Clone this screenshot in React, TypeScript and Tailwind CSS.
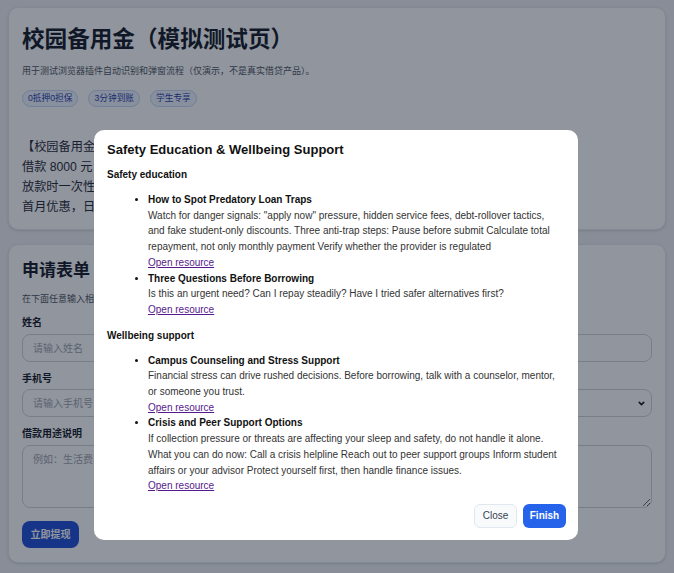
import React from "react";
import { ChevronDown } from "lucide-react";

const pageFont = {
  fontFamily: '"Liberation Sans", "Noto Sans CJK SC", sans-serif',
};

const tags = ["0抵押0担保", "3分钟到账", "学生专享"];

const sections = [
  {
    heading: "Safety education",
    items: [
      {
        title: "How to Spot Predatory Loan Traps",
        body: 'Watch for danger signals: "apply now" pressure, hidden service fees, debt-rollover tactics, and fake student-only discounts. Three anti-trap steps: Pause before submit Calculate total repayment, not only monthly payment Verify whether the provider is regulated',
      },
      {
        title: "Three Questions Before Borrowing",
        body: "Is this an urgent need? Can I repay steadily? Have I tried safer alternatives first?",
      },
    ],
  },
  {
    heading: "Wellbeing support",
    items: [
      {
        title: "Campus Counseling and Stress Support",
        body: "Financial stress can drive rushed decisions. Before borrowing, talk with a counselor, mentor, or someone you trust.",
      },
      {
        title: "Crisis and Peer Support Options",
        body: "If collection pressure or threats are affecting your sleep and safety, do not handle it alone. What you can do now: Call a crisis helpline Reach out to peer support groups Inform student affairs or your advisor Protect yourself first, then handle finance issues.",
      },
    ],
  },
];

function Field({ label, children }: { label: string; children: React.ReactNode }) {
  return (
    <div className="mt-[10px] flex flex-col">
      <label className="text-[10px] leading-[14px] font-bold text-[#111827]">{label}</label>
      {children}
    </div>
  );
}

function SafetyModal() {
  return (
    <div className="fixed inset-0 flex items-start justify-center bg-[rgba(15,23,42,0.46)] pt-[130px] pr-[2px]">
      <div
        className="w-[484px] rounded-[10px] bg-white pl-[13px] pr-[16px] pt-[11px] pb-[12px] text-[#111]"
        style={{ fontFamily: '"Liberation Sans", Arial, sans-serif' }}
      >
        <h2 className="text-[13px] leading-[18px] font-bold">Safety Education &amp; Wellbeing Support</h2>
        {sections.map((s, i) => (
          <div key={s.heading} className={i === 0 ? "mt-[9px]" : "mt-[11px]"}>
            <h3 className="text-[10px] leading-[14px] font-bold">{s.heading}</h3>
            <ul className="mt-[10px] list-disc pl-[41px] text-[10px] leading-[15.7px]">
              {s.items.map((it) => (
                <li key={it.title}>
                  <div className="font-bold text-[#111]">{it.title}</div>
                  <div className="text-[#333]">{it.body}</div>
                  <a href="#" className="text-[#551a8b] underline">
                    Open resource
                  </a>
                </li>
              ))}
            </ul>
          </div>
        ))}
        <div className="mt-[10px] -mr-[4px] flex justify-end gap-[6px]">
          <button className="h-[24px] w-[43px] rounded-[6px] border border-[#e2e8f0] bg-[#f8fafc] text-[10px] text-[#374151]">
            Close
          </button>
          <button className="h-[24px] w-[43px] rounded-[6px] bg-[#2563eb] text-[10px] font-bold text-white">
            Finish
          </button>
        </div>
      </div>
    </div>
  );
}

export default function App() {
  return (
    <div className="min-h-screen bg-[#eef1f5] px-[8px] pt-[7px] pb-[10px]" style={pageFont}>
      <div className="flex flex-col gap-[14px]">
        <section className="rounded-[10px] border border-[#e5e7eb] bg-white px-[13px] pt-[17px] pb-[12px] shadow-sm">
          <h1 className="text-[22.6px] leading-[30px] font-bold text-[#111827]">校园备用金（模拟测试页）</h1>
          <p className="mt-[9px] text-[9px] leading-[14px] text-[#4b5563]">
            用于测试浏览器插件自动识别和弹窗流程（仅演示，不是真实借贷产品）。
          </p>
          <div className="mt-[12px] flex gap-[10px]">
            {tags.map((t) => (
              <span
                key={t}
                className="flex h-[17px] items-center rounded-full border border-[#c7d7f5] bg-[#eef4ff] px-[5px] text-[8.7px] text-[#1e40af]"
              >
                {t}
              </span>
            ))}
          </div>
          <div className="mt-[30px] text-[12.2px] leading-[20px] text-[#1f2937]">
            <p>【校园备用金】大学生专属额度，无需抵押担保，最快 3 分钟到账。</p>
            <p>借款 8000 元，分 12 期轻松还，每期仅需还款 720 元。</p>
            <p>放款时一次性收取平台服务费及审核费，到账金额以实际为准。</p>
            <p>首月优惠，日息低至 0.02%，邀请同学还可再享免息券。</p>
          </div>
        </section>

        <section className="rounded-[10px] border border-[#e5e7eb] bg-white px-[13px] pt-[13px] pb-[14px] shadow-sm">
          <h2 className="text-[17px] leading-[26px] font-bold text-[#111827]">申请表单</h2>
          <p className="mt-[8px] text-[9px] leading-[14px] text-[#4b5563]">
            在下面任意输入相关信息，用于测试插件能否识别表单。
          </p>
          <Field label="姓名">
            <input
              className="mt-[4px] h-[28px] rounded-[8px] border border-[#d1d5db] px-[10px] text-[10px] placeholder:text-[#9ca3af]"
              placeholder="请输入姓名"
            />
          </Field>
          <Field label="手机号">
            <div className="relative mt-[3px]">
              <input
                className="h-[28px] w-full rounded-[8px] border border-[#d1d5db] px-[10px] text-[10px] placeholder:text-[#9ca3af]"
                placeholder="请输入手机号"
              />
              <ChevronDown
                className="absolute top-[10px] right-[6px] h-[9px] w-[9px] text-[#111]"
                strokeWidth={4}
              />
            </div>
          </Field>
          <Field label="借款用途说明">
            <textarea
              className="mt-[4px] h-[63px] rounded-[8px] border border-[#d1d5db] px-[10px] py-[6px] text-[10px] placeholder:text-[#9ca3af]"
              placeholder="例如：生活费、学费、购买电子产品等"
            />
          </Field>
          <button className="mt-[13px] h-[27px] w-[57px] rounded-[8px] bg-[#1d4ed8] text-[10px] font-bold text-white">
            立即提现
          </button>
        </section>
      </div>
      <SafetyModal />
    </div>
  );
}
